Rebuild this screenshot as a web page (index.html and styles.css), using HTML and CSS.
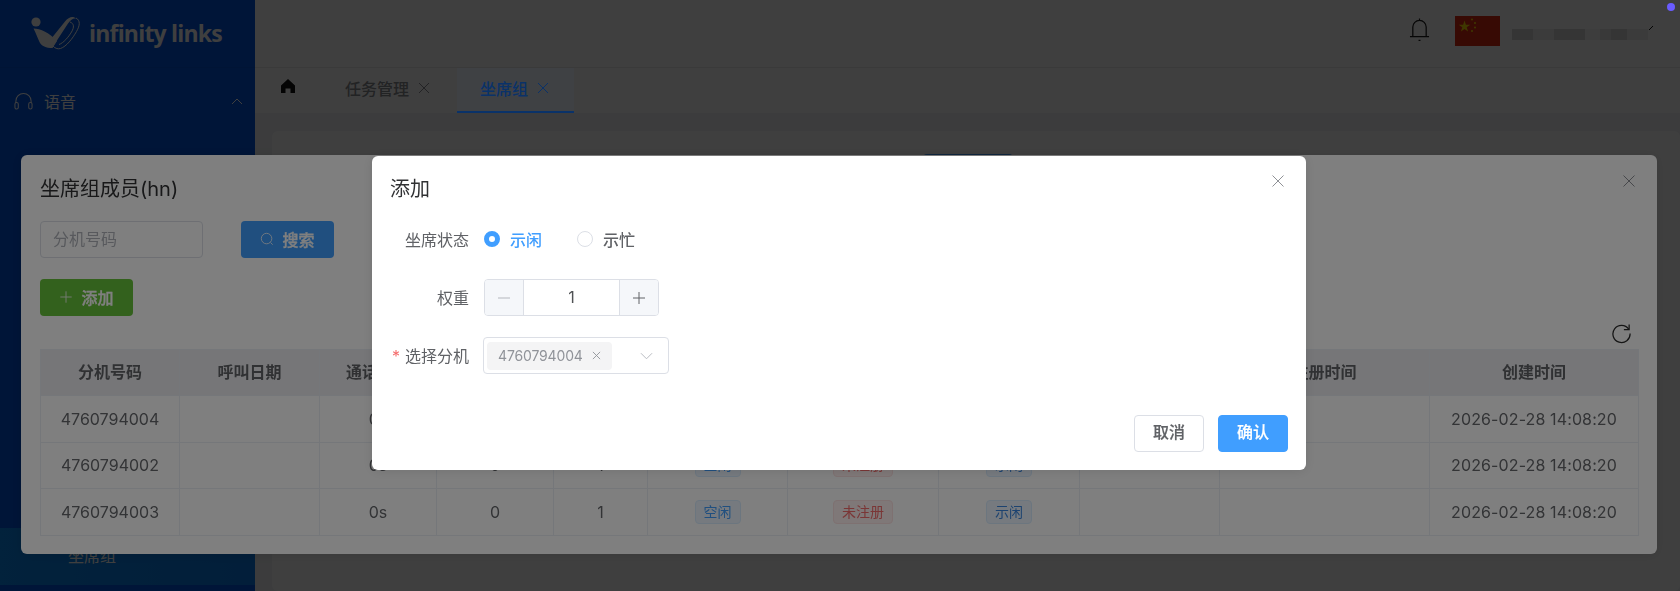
FILE: index.html
```html
<!DOCTYPE html>
<html lang="zh-CN">
<head>
<meta charset="utf-8">
<title>坐席组</title>
<link rel="stylesheet" href="styles.css">
</head>
<body>
<div class="app">
  <aside class="sidebar">
    <div class="brand">
      <svg class="brand-mark" viewBox="0 0 52 36" fill="none">
        <circle cx="6" cy="8" r="4.6" fill="#fff"/>
        <path d="M3.5 14.5C10 14.5 20 19 27 27L22.5 34C16 34 11.500 32 9.500 28C7.500 24 6 19 3.500 14.500Z" fill="#fff"/>
        <path d="M18.500 28L35 7.500C38.500 3 43 1.500 46 4.500C43 4 41 5.500 38 9.500L24 31Z" fill="#fff"/>
        <path d="M46 4C50.500 6.500 50 11.500 46.500 17.500C42.500 24.500 36.500 32.500 30.500 34.500C27.500 35.500 24.500 34 22.500 31.500M40 8C44 9.500 44.500 13 41.500 18C38.500 23 33.500 29 29 30.500" stroke="#fff" stroke-width="1"/>
      </svg>
      <span class="brand-name">infinity links</span>
    </div>
    <div class="menu-head">
      <svg class="ico-head" viewBox="0 0 20 18" fill="none" stroke="#fff" stroke-width="1.100">
        <path d="M2 11V9a8 8 0 0 1 16 0v2"/>
        <rect x="1" y="10.500" width="3.500" height="7" rx="1.700"/>
        <rect x="15.500" y="10.500" width="3.500" height="7" rx="1.700"/>
      </svg>
      <span class="menu-label">语音</span>
      <svg class="ico-chev" viewBox="0 0 12 7" fill="none" stroke="#fff" stroke-width="1"><path d="M1 6l5-5 5 5"/></svg>
    </div>
    <div class="menu-active">坐席组</div>
  </aside>

  <main class="main">
    <header class="topbar">
      <svg class="ico-bell" viewBox="0 0 22 27" fill="none" stroke="#1c1c1c" stroke-width="1.300">
        <path d="M1 21.500h20M4 21.500V11.500a7 7 0 0 1 14 0v10M11 4.500V2.500M10 25.500h2"/>
      </svg>
      <svg class="flag" viewBox="0 0 45 30">
        <rect width="45" height="30" fill="#de2910"/>
        <polygon points="9.500,4.500 10.900,8.700 15.300,8.700 11.700,11.300 13.100,15.500 9.500,12.900 5.900,15.500 7.300,11.300 3.700,8.700 8.100,8.700" fill="#ffde00"/>
        <circle cx="17" cy="3.500" r="1" fill="#ffde00"/><circle cx="20" cy="7" r="1" fill="#ffde00"/>
        <circle cx="20" cy="11.500" r="1" fill="#ffde00"/><circle cx="17" cy="15" r="1" fill="#ffde00"/>
      </svg>
      <div class="masked"></div>
      <svg class="tick" viewBox="0 0 6 6" fill="none" stroke="#111" stroke-width="1"><path d="M1 5l4-4"/></svg>
    </header>
    <nav class="tabs">
      <div class="tab tab-home">
        <svg class="ico-home" viewBox="0 0 16 16" fill="#111"><path d="M8 1L1 7.500V15h4.500v-4.500h5V15H15V7.500z"/></svg>
      </div>
      <div class="tab">任务管理<svg class="ico-x" viewBox="0 0 12 12"><path d="M1 1l10 10M11 1L1 11"/></svg></div>
      <div class="tab tab-on">坐席组<svg class="ico-x" viewBox="0 0 12 12"><path d="M1 1l10 10M11 1L1 11"/></svg></div>
    </nav>
    <section class="content">
      <div class="card"><div class="card-btn"></div></div>
    </section>
  </main>
</div>

<div class="mask mask-back"></div>

<div class="dialog dialog-list">
  <h2 class="dlg-title">坐席组成员(hn)</h2>
  <svg class="dlg-close" viewBox="0 0 12 12"><path d="M.5.5l11 11M11.500.5l-11 11"/></svg>
  <div class="search-row">
    <div class="input">分机号码</div>
    <div class="btn btn-blue">
      <svg class="btn-ico" viewBox="0 0 16 16" fill="none" stroke="currentColor" stroke-width="1.100"><circle cx="7.500" cy="7.500" r="6"/><path d="M12 12l2.500 2.500"/></svg>搜索
    </div>
  </div>
  <div class="add-row">
    <div class="btn btn-green">
      <svg class="btn-ico" viewBox="0 0 16 16" fill="none" stroke="currentColor" stroke-width="1.100"><path d="M8 1.500v13M1.500 8h13"/></svg>添加
    </div>
  </div>
  <div class="tools">
    <svg class="ico-refresh" viewBox="0 0 22 22" fill="none" stroke="#2a2a2a" stroke-width="1.300">
      <path d="M18.500 6.500A9 9 0 1 0 20 11"/><path d="M19 1.500v5.500h-5.500"/>
    </svg>
  </div>
  <table class="grid">
    <colgroup><col><col><col><col><col><col><col><col><col><col><col></colgroup>
    <thead>
      <tr><th>分机号码</th><th>呼叫日期</th><th>通话时长</th><th>呼叫次数</th><th>权重</th><th>坐席状态</th><th>注册状态</th><th>示忙状态</th><th>注册地址</th><th>注册时间</th><th>创建时间</th></tr>
    </thead>
    <tbody>
      <tr><td>4760794004</td><td></td><td>0s</td><td>0</td><td>1</td><td><span class="tag">空闲</span></td><td><span class="tag tag-red">未注册</span></td><td><span class="tag tag-deep">示闲</span></td><td></td><td></td><td class="cell-date">2026-02-28 14:08:20</td></tr>
      <tr><td>4760794002</td><td></td><td>0s</td><td>0</td><td>1</td><td><span class="tag">空闲</span></td><td><span class="tag tag-red">未注册</span></td><td><span class="tag tag-deep">示闲</span></td><td></td><td></td><td class="cell-date">2026-02-28 14:08:20</td></tr>
      <tr><td>4760794003</td><td></td><td>0s</td><td>0</td><td>1</td><td><span class="tag">空闲</span></td><td><span class="tag tag-red">未注册</span></td><td><span class="tag tag-deep">示闲</span></td><td></td><td></td><td class="cell-date">2026-02-28 14:08:20</td></tr>
    </tbody>
  </table>
</div>

<div class="mask mask-front"></div>

<div class="dialog dialog-add">
  <h2 class="dlg-title">添加</h2>
  <svg class="dlg-close" viewBox="0 0 12 12"><path d="M.5.5l11 11M11.500.5l-11 11"/></svg>
  <div class="form-row form-first">
    <label class="form-label">坐席状态</label>
    <div class="radios">
      <span class="radio radio-on"></span><span class="radio-text radio-text-on">示闲</span>
      <span class="radio radio-second"></span><span class="radio-text">示忙</span>
    </div>
  </div>
  <div class="form-row">
    <label class="form-label">权重</label>
    <div class="stepper">
      <span class="step"><svg viewBox="0 0 14 14" class="step-ico step-dim"><path d="M1 7h12"/></svg></span>
      <span class="step-val">1</span>
      <span class="step"><svg viewBox="0 0 14 14" class="step-ico"><path d="M1 7h12M7 1v12"/></svg></span>
    </div>
  </div>
  <div class="form-row">
    <label class="form-label"><span class="req">*</span>选择分机</label>
    <div class="select">
      <span class="chip">4760794004<svg class="chip-x" viewBox="0 0 10 10"><path d="M1 1l8 8M9 1L1 9"/></svg></span>
      <svg class="select-chev" viewBox="0 0 14 8" fill="none" stroke="#b4b7bd" stroke-width="1"><path d="M1 1l6 6 6-6"/></svg>
    </div>
  </div>
  <div class="dlg-foot">
    <div class="btn-foot">取消</div>
    <div class="btn-foot btn-foot-main">确认</div>
  </div>
</div>

<div class="dot"></div>
</body>
</html>
```

FILE: styles.css
```css
* { box-sizing: border-box; }
html, body { margin: 0; height: 591px; overflow: hidden; }
body { font-family: Inter, "Noto Sans CJK SC", sans-serif; font-size: 16px; color: #606266; background: #fff; }
svg { display: block; flex: none; }

.app { display: flex; height: 591px; }

/* sidebar */
.sidebar { width: 255px; flex: none; display: flex; flex-direction: column; background: #0054e0; color: #fff; }
.brand { height: 68px; flex: none; display: flex; align-items: flex-start; padding: 14px 0 0 30px; border-bottom: 1px solid #0050d6; }
.brand-mark { width: 52px; height: 36px; }
.brand-name { font-family: "Open Sans", sans-serif; font-weight: 700; font-size: 23px; line-height: 38px; letter-spacing: -.8px; margin-left: 7px; white-space: nowrap; }
.menu-head { height: 56px; margin-top: 5px; display: flex; align-items: center; padding-left: 14px; }
.ico-head { width: 19px; height: 18px; }
.menu-label { margin-left: 11px; }
.ico-chev { width: 12px; height: 7px; margin-left: 155px; }
.menu-active { margin-top: auto; margin-bottom: 6px; height: 57px; line-height: 56px; padding-left: 68px; background: linear-gradient(90deg, #0a88f0, #0a7ae8); }

/* main */
.main { flex: 1; min-width: 0; display: flex; flex-direction: column; background: #f0f2f5; }
.topbar { height: 68px; flex: none; display: flex; justify-content: flex-end; align-items: flex-start; padding: 16px 26px 0 0; background: #fff; border-bottom: 1px solid #e8e8e8; }
.ico-bell { width: 21px; height: 26px; margin-right: 25px; }
.flag { width: 45px; height: 30px; }
.masked { width: 136px; height: 11px; margin: 13px 0 0 12px; background: linear-gradient(90deg, #d4d4d4 0 21px, #eeeeee 21px 42px, #d6d6d6 42px 73px, #f6f6f6 73px 88px, #e6e6e6 88px 99px, #d4d4d4 99px 115px, #eeeeee 115px 136px); }
.tick { width: 6px; height: 6px; margin: 9px 0 0 0; }

.tabs { height: 45px; flex: none; display: flex; background: #fff; }
.tab { display: flex; align-items: center; gap: 9px; padding: 0 25px 4px 24px; color: #8a8c90; font-weight: 500; border-bottom: 2px solid transparent; }
.tab:nth-child(2) { padding-right: 27px; }
.tab-home { width: 66px; padding: 0 0 8px 25px; }
.ico-home { width: 16px; height: 16px; }
.tab-on { position: relative; z-index: 2; padding-left: 23px; color: #1464d2; border-bottom-color: #1464d2; background: #7e8288; }
.ico-x { width: 12px; height: 12px; fill: none; stroke: #8d8f94; stroke-width: 1; }
.tab-on .ico-x { stroke: #1464d2; }

.content { flex: 1; padding: 18px 0 0 17px; }
.card { height: 100%; padding: 23px 0 0 651px; background: #fff; border-radius: 6px; }
.card-btn { width: 90px; height: 37px; background: #409eff; border-radius: 4px; }

/* layers */
.mask { position: fixed; inset: 0; background: rgba(0, 0, 0, .5); }
.mask-back { z-index: 1; }
.mask-front { z-index: 3; }
.dialog { position: fixed; background: #fff; border-radius: 6px; box-shadow: 0 1px 12px rgba(0, 0, 0, .1); display: flex; flex-direction: column; }
.dialog-list { z-index: 2; left: 21px; top: 155px; width: 1636px; height: 399px; padding: 20px 19px 0; }
.dialog-add { z-index: 4; left: 372px; top: 156px; width: 934px; height: 314px; padding: 19px 18px 0; }
.dlg-title { margin: 0; font-size: 20px; line-height: 28px; font-weight: 400; color: #303133; }
.dlg-close { position: absolute; top: 20px; right: 22px; width: 12px; height: 12px; fill: none; stroke: #8f9196; stroke-width: 1; }
.dialog-add .dlg-close { top: 19px; }

/* list dialog */
.search-row { display: flex; margin-top: 18px; }
.input { width: 163px; height: 37px; line-height: 35px; padding-left: 12px; border: 1px solid #dcdfe6; border-radius: 4px; color: #b0b3ba; }
.btn { height: 37px; display: flex; align-items: center; justify-content: center; gap: 8px; padding-bottom: 2px; color: #fff; border-radius: 4px; font-weight: 500; width: 93px; -webkit-text-stroke: .3px currentColor; }
.btn-blue { margin-left: 38px; background: #409eff; }
.btn-green { background: #67c23a; }
.btn-ico { width: 14px; height: 14px; opacity: .85; }
.add-row { margin-top: 21px; }
.tools { margin-top: 7px; height: 20px; margin-bottom: 6px; display: flex; justify-content: flex-end; padding-right: 6px; }
.ico-refresh { width: 21px; height: 21px; }

.grid { width: 1598px; table-layout: fixed; border-collapse: collapse; border: 1px solid #ebeef5; text-align: center; }
.grid col:nth-child(1) { width: 139px; }
.grid col:nth-child(2) { width: 140px; }
.grid col:nth-child(3) { width: 117px; }
.grid col:nth-child(4) { width: 117px; }
.grid col:nth-child(5) { width: 94px; }
.grid col:nth-child(6) { width: 140px; }
.grid col:nth-child(7) { width: 151px; }
.grid col:nth-child(8) { width: 141px; }
.grid col:nth-child(9) { width: 140px; }
.grid col:nth-child(10) { width: 210px; }
.grid col:nth-child(11) { width: 209px; }
.grid th, .grid td { border: 1px solid #ebeef5; padding: 0; font-size: 16px; }
.grid th { height: 46px; padding-bottom: 4px; background: #ecedf0; color: #606266; font-weight: 700; }
.grid td { height: 46.67px; color: #66686c; }
.grid .cell-date { letter-spacing: .12px; }
.tag { display: inline-block; height: 24px; line-height: 22px; padding: 0 8px; font-size: 14px; border: 1px solid #d9ecff; border-radius: 4px; background: #ecf5ff; color: #409eff; vertical-align: middle; }
.tag-red { background: #fef0f0; border-color: #fde2e2; color: #f56c6c; }
.tag-deep { color: #3a86e0; }

/* add dialog */
.form-row { display: flex; align-items: center; height: 37px; margin-top: 21px; }
.form-first { margin-top: 18px; }
.form-label { width: 79px; text-align: right; flex: none; margin: 0 14px 2px 0; color: #606266; white-space: nowrap; }
.req { color: #f56c6c; margin-right: 5px; }
.radios { display: flex; align-items: center; margin: 0 0 2px 1px; }
.radio { width: 16px; height: 16px; border-radius: 50%; border: 1px solid #dcdfe6; background: #fff; }
.radio-on { border: 5px solid #409eff; }
.radio-second { margin-left: 35px; }
.radio-text { margin-left: 10px; font-weight: 500; }
.radio-text-on { color: #409eff; }
.stepper { width: 175px; height: 37px; margin-left: 1px; display: flex; border: 1px solid #dcdfe6; border-radius: 4px; overflow: hidden; }
.step { width: 38px; flex: none; display: flex; align-items: center; justify-content: center; background: #f5f7fa; }
.step-ico { width: 14px; height: 14px; fill: none; stroke: #606266; stroke-width: 1; }
.step-dim { stroke: #b4b7bd; }
.step-val { flex: 1; text-align: center; line-height: 35px; border-left: 1px solid #dcdfe6; border-right: 1px solid #dcdfe6; color: #505255; }
.select { width: 186px; height: 37px; display: flex; align-items: center; padding: 0 15px 0 3px; border: 1px solid #dcdfe6; border-radius: 4px; }
.chip { width: 125px; height: 28px; display: flex; align-items: center; padding-left: 11px; gap: 9px; font-size: 14px; letter-spacing: -.15px; color: #909399; background: #f4f4f5; border-radius: 4px; }
.chip-x { width: 9px; height: 9px; fill: none; stroke: #909399; stroke-width: 1; }
.select-chev { width: 13px; height: 8px; margin-left: auto; }
.dlg-foot { display: flex; justify-content: flex-end; gap: 14px; margin-top: 41px; }
.btn-foot { width: 70px; height: 37px; line-height: 33px; text-align: center; border: 1px solid #dcdfe6; border-radius: 4px; font-weight: 500; color: #606266; -webkit-text-stroke: .2px currentColor; }
.btn-foot-main { background: #409eff; border-color: #409eff; color: #fff; }

.dot { position: fixed; z-index: 5; top: 3px; right: 5px; width: 8px; height: 8px; border-radius: 50%; background: #6a5cff; }
```
